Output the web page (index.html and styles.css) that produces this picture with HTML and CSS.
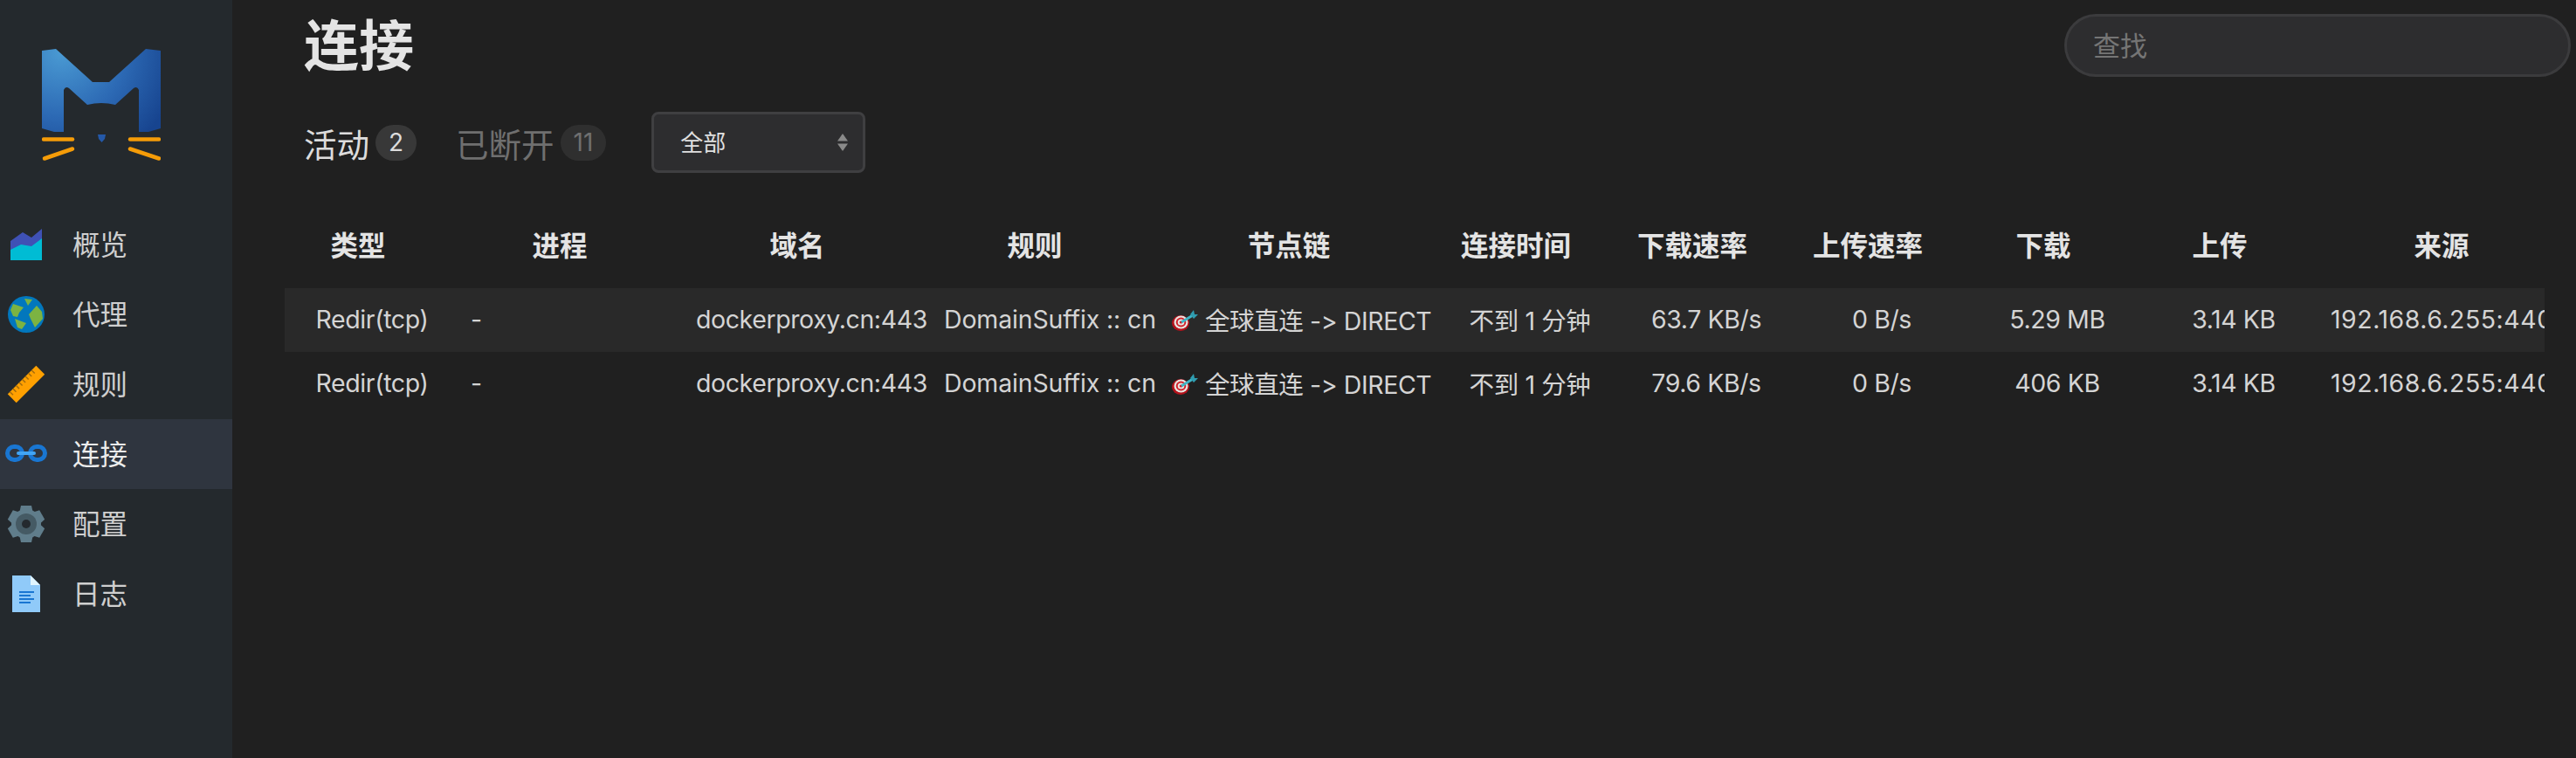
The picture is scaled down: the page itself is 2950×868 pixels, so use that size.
FILE: index.html
```html
<!DOCTYPE html>
<html lang="zh-CN">
<head>
    <meta charset="UTF-8">
    <title>连接</title>
    <link rel="stylesheet" href="styles.css">
</head>
<body>
    <div class="app">
        <nav class="sidebar">
            <div class="logo">
                <svg width="136" height="132" viewBox="48 54 136 132">
                    <defs>
                        <radialGradient id="logo-grad" gradientUnits="userSpaceOnUse" cx="70" cy="60" r="135">
                            <stop offset="0" stop-color="#4a9ad3"/>
                            <stop offset="0.55" stop-color="#2c69b4"/>
                            <stop offset="1" stop-color="#17448f"/>
                        </radialGradient>
                    </defs>
                    <path fill="url(#logo-grad)" d="M48 58 L64 56 L106 94 L125 94 L167 56 L184 58 L184 147 L170 151 L159 151 L159 103 Q157 98 153 101 L132 120 Q116 116 100 120 L79 101 Q75 98 73 103 L73 151 L62 151 L48 147 Z"/>
                    <path fill="#2458a8" d="M112 154 L121 154 L120 159 L116.500 163 L113 159 Z"/>
                    <g stroke="#f59c08" stroke-width="4.500" stroke-linecap="round">
                        <line x1="50" y1="159.500" x2="83" y2="159.500"/>
                        <line x1="51" y1="181.500" x2="83" y2="170.500"/>
                        <line x1="149" y1="159.500" x2="182" y2="159.500"/>
                        <line x1="149" y1="170.500" x2="182" y2="181.500"/>
                    </g>
                </svg>
            </div>
            <a class="nav-item">
                <svg class="nav-icon" viewBox="0 0 48 48">
                    <polygon fill="#3f51b5" points="6,20 20,10 30,16 42,6 42,30 6,34"/>
                    <polygon fill="#00bcd4" points="6,30 18,24 30,26 42,17 42,42 6,42"/>
                </svg>
                <span>概览</span>
            </a>
            <a class="nav-item">
                <svg class="nav-icon" viewBox="0 0 48 48">
                    <circle cx="24" cy="24" r="21" fill="#0277bd"/>
                    <g fill="#7cb342">
                        <polygon points="27,24 36,14 42,21 43,29 34,39 29,29"/>
                        <polygon points="9,12 21,16 16,22 14,27 9,26 6,19"/>
                        <polygon points="22,6 31,7 26,14"/>
                        <polygon points="11,29 24,34 19,41 14,39"/>
                    </g>
                </svg>
                <span>代理</span>
            </a>
            <a class="nav-item">
                <svg class="nav-icon" viewBox="0 0 48 48">
                    <g transform="rotate(-45 24 24)">
                        <rect x="1" y="17" width="46" height="14" fill="#ffa000"/>
                        <line x1="4" y1="19.500" x2="44" y2="19.500" stroke="#a56d0c" stroke-width="5" stroke-dasharray="1.500 3.500"/>
                    </g>
                </svg>
                <span>规则</span>
            </a>
            <a class="nav-item active">
                <svg class="nav-icon" viewBox="0 0 48 48">
                    <rect x="2.500" y="15.500" width="17" height="15" rx="7.500" fill="none" stroke="#1976d2" stroke-width="5"/>
                    <rect x="28.500" y="15.500" width="17" height="15" rx="7.500" fill="none" stroke="#1976d2" stroke-width="5"/>
                    <rect x="13" y="21" width="22" height="4" rx="2" fill="#42a5f5"/>
                </svg>
                <span>连接</span>
            </a>
            <a class="nav-item">
                <svg class="nav-icon" viewBox="0 0 48 48">
                    <g fill="#607d8b">
                        <circle cx="24" cy="24" r="17"/>
                        <polygon points="18,3 30,3 32,12 16,12"/>
                        <polygon points="18,3 30,3 32,12 16,12" transform="rotate(60 24 24)"/>
                        <polygon points="18,3 30,3 32,12 16,12" transform="rotate(120 24 24)"/>
                        <polygon points="18,3 30,3 32,12 16,12" transform="rotate(180 24 24)"/>
                        <polygon points="18,3 30,3 32,12 16,12" transform="rotate(240 24 24)"/>
                        <polygon points="18,3 30,3 32,12 16,12" transform="rotate(300 24 24)"/>
                    </g>
                    <circle cx="24" cy="24" r="12" fill="#455a64"/>
                    <circle cx="24" cy="24" r="5" fill="#24292e"/>
                </svg>
                <span>配置</span>
            </a>
            <a class="nav-item">
                <svg class="nav-icon" viewBox="0 0 48 48">
                    <polygon fill="#90caf9" points="8,3 29,3 40,14 40,45 8,45"/>
                    <polygon fill="#e1f5fe" points="29,3 40,14 29,14"/>
                    <g fill="#1976d2">
                        <rect x="16" y="21" width="17" height="2"/>
                        <rect x="16" y="25" width="13" height="2"/>
                        <rect x="16" y="29" width="17" height="2"/>
                        <rect x="16" y="33" width="13" height="2"/>
                    </g>
                </svg>
                <span>日志</span>
            </a>
        </nav>

        <main class="content">
            <div class="header">
                <h1>连接</h1>
                <input class="search" type="text" placeholder="查找">
            </div>

            <div class="toolbar">
                <div class="tab active">活动<span class="badge">2</span></div>
                <div class="tab">已断开<span class="badge">11</span></div>
                <div class="select-wrap">
                    <select class="select">
                        <option>全部</option>
                    </select>
                    <svg class="select-arrows" width="12" height="20" viewBox="0 0 12 20">
                        <polygon fill="#8a8a8a" points="6,0 12,8.500 0,8.500"/>
                        <polygon fill="#8a8a8a" points="0,11.500 12,11.500 6,20"/>
                    </svg>
                </div>
            </div>

            <div class="table-wrap">
                <table class="conn-table">
                    <colgroup>
                        <col class="col-type">
                        <col class="col-process">
                        <col class="col-host">
                        <col class="col-rule">
                        <col class="col-chain">
                        <col class="col-time">
                        <col class="col-speed">
                        <col class="col-speed2">
                        <col class="col-size">
                        <col class="col-size2">
                        <col class="col-source">
                    </colgroup>
                    <thead>
                        <tr>
                            <th>类型</th>
                            <th>进程</th>
                            <th>域名</th>
                            <th>规则</th>
                            <th>节点链</th>
                            <th>连接时间</th>
                            <th>下载速率</th>
                            <th>上传速率</th>
                            <th>下载</th>
                            <th>上传</th>
                            <th>来源</th>
                        </tr>
                    </thead>
                    <tbody>
                        <tr class="odd">
                            <td class="center">Redir(tcp)</td>
                            <td class="process">-</td>
                            <td>dockerproxy.cn:443</td>
                            <td class="rule">DomainSuffix :: cn</td>
                            <td><svg class="dart" viewBox="0 0 30 24"><use href="#dart-icon"/></svg>全球直连 -&gt; DIRECT</td>
                            <td class="center">不到 1 分钟</td>
                            <td class="center">63.7 KB/s</td>
                            <td class="center">0 B/s</td>
                            <td class="center">5.29 MB</td>
                            <td class="center">3.14 KB</td>
                            <td class="source">192.168.6.255:44062</td>
                        </tr>
                        <tr>
                            <td class="center">Redir(tcp)</td>
                            <td class="process">-</td>
                            <td>dockerproxy.cn:443</td>
                            <td class="rule">DomainSuffix :: cn</td>
                            <td><svg class="dart" viewBox="0 0 30 24"><use href="#dart-icon"/></svg>全球直连 -&gt; DIRECT</td>
                            <td class="center">不到 1 分钟</td>
                            <td class="center">79.6 KB/s</td>
                            <td class="center">0 B/s</td>
                            <td class="center">406 KB</td>
                            <td class="center">3.14 KB</td>
                            <td class="source">192.168.6.255:44060</td>
                        </tr>
                    </tbody>
                </table>
            </div>
        </main>
    </div>

    <svg class="defs" width="0" height="0">
        <symbol id="dart-icon" viewBox="0 0 30 24">
            <ellipse cx="10" cy="15" rx="10" ry="9" fill="#b3121b"/>
            <ellipse cx="10.500" cy="14" rx="8" ry="7.500" fill="#e8e4e0"/>
            <ellipse cx="10.500" cy="14" rx="5.800" ry="5.400" fill="#d3222c"/>
            <ellipse cx="10.500" cy="14" rx="3.800" ry="3.500" fill="#e8e4e0"/>
            <ellipse cx="10.500" cy="14" rx="1.800" ry="1.600" fill="#d3222c"/>
            <line x1="11" y1="14" x2="24" y2="6" stroke="#3fb4c6" stroke-width="3"/>
            <polygon fill="#2f9db0" points="21,5 25,0 26,5 30,5 25,10"/>
        </symbol>
    </svg>
</body>
</html>
```

FILE: styles.css
```css
body {
    margin: 0;
    background: #202020;
    color: #e0e0e0;
    font-family: Inter, "Noto Sans CJK SC", sans-serif;
    overflow: hidden;
}
.app {
    display: flex;
    min-height: 100vh;
}
.defs {
    position: absolute;
}

/* sidebar */
.sidebar {
    width: 266px;
    flex-shrink: 0;
    background: #24292d;
}
.logo {
    height: 240px;
    box-sizing: border-box;
    padding: 54px 0 0 48px;
}
.logo svg {
    display: block;
}
.nav-item {
    display: flex;
    align-items: center;
    height: 80px;
    padding-left: 6px;
    font-size: 31.5px;
    color: #cfcfcf;
}
.nav-item span {
    margin-top: -5px;
}
.nav-item.active {
    background: #2f353f;
    color: #ececec;
}
.nav-icon {
    width: 48px;
    height: 48px;
    margin-right: 29px;
}

/* main */
.content {
    flex: 1;
    min-width: 0;
    padding-left: 60px;
}
.header {
    display: flex;
    justify-content: space-between;
    align-items: flex-start;
    padding: 0 6px 0 22px;
}
h1 {
    margin: 0;
    font-size: 63px;
    line-height: 104px;
    font-weight: 700;
    color: #e4e4e4;
}
.search {
    width: 580px;
    height: 72px;
    box-sizing: border-box;
    margin-top: 16px;
    padding: 0 30px;
    background: #2d2d2f;
    border: 3px solid #3b3b3d;
    border-radius: 36px;
    color: #e0e0e0;
    font-family: inherit;
    font-size: 31px;
}
.search::placeholder {
    color: #757575;
    opacity: 1;
}
.toolbar {
    display: flex;
    align-items: center;
    margin-top: 24px;
    padding-left: 22px;
}
.tab {
    display: flex;
    align-items: center;
    margin-right: 45px;
    font-size: 37.5px;
    color: #6f6f6f;
}
.tab.active {
    color: #dcdcdc;
}
.badge {
    min-width: 44px;
    height: 41px;
    box-sizing: border-box;
    margin-left: 7px;
    padding: 0 15px;
    border-radius: 21px;
    background: #2f2f2f;
    font-size: 28px;
    line-height: 41px;
    text-align: center;
}
.tab.active .badge {
    background: #383838;
    margin-left: 7px;
}
.select-wrap {
    position: relative;
    width: 245px;
    height: 70px;
    margin-left: 7px;
}
.select {
    width: 100%;
    height: 100%;
    padding: 0 30px;
    appearance: none;
    background: #2d2d2f;
    border: 3px solid #3f3f41;
    border-radius: 8px;
    color: #e0e0e0;
    font-family: inherit;
    font-size: 26px;
}
.select-arrows {
    position: absolute;
    top: 25px;
    right: 20px;
}

/* table */
.table-wrap {
    width: 2588px;
    margin-top: 34px;
    overflow: hidden;
}
.conn-table {
    width: 2640px;
    table-layout: fixed;
    border-collapse: collapse;
    font-size: 28.5px;
    letter-spacing: -0.4px;
    font-variant-ligatures: none;
    font-feature-settings: "calt" 0;
}
.col-type { width: 200px; }
.col-process { width: 262px; }
.col-host { width: 282px; }
.col-rule { width: 262px; }
.col-chain { width: 320px; }
.col-time { width: 200px; }
.col-speed { width: 204px; }
.col-speed2 { width: 198px; }
.col-size { width: 204px; }
.col-size2 { width: 200px; }
.col-source { width: 308px; }
th {
    height: 94px;
    padding: 0 32px 4px 0;
    font-size: 31.5px;
    font-weight: 700;
    letter-spacing: 0;
    color: #e4e4e4;
    text-align: center;
}
td {
    height: 71px;
    padding: 0 0 2px 9px;
    color: #d4d4d4;
    white-space: nowrap;
}
td.center {
    padding-right: 9px;
    text-align: center;
}
td.process {
    padding-left: 13px;
}
td.rule {
    padding-left: 11px;
    letter-spacing: -0.15px;
}
td.source {
    padding-left: 11px;
    letter-spacing: 0.5px;
}
tr.odd {
    background: #292929;
}
.dart {
    width: 30px;
    height: 24px;
    margin: 0 8px 0 1px;
    vertical-align: -1px;
}
```
